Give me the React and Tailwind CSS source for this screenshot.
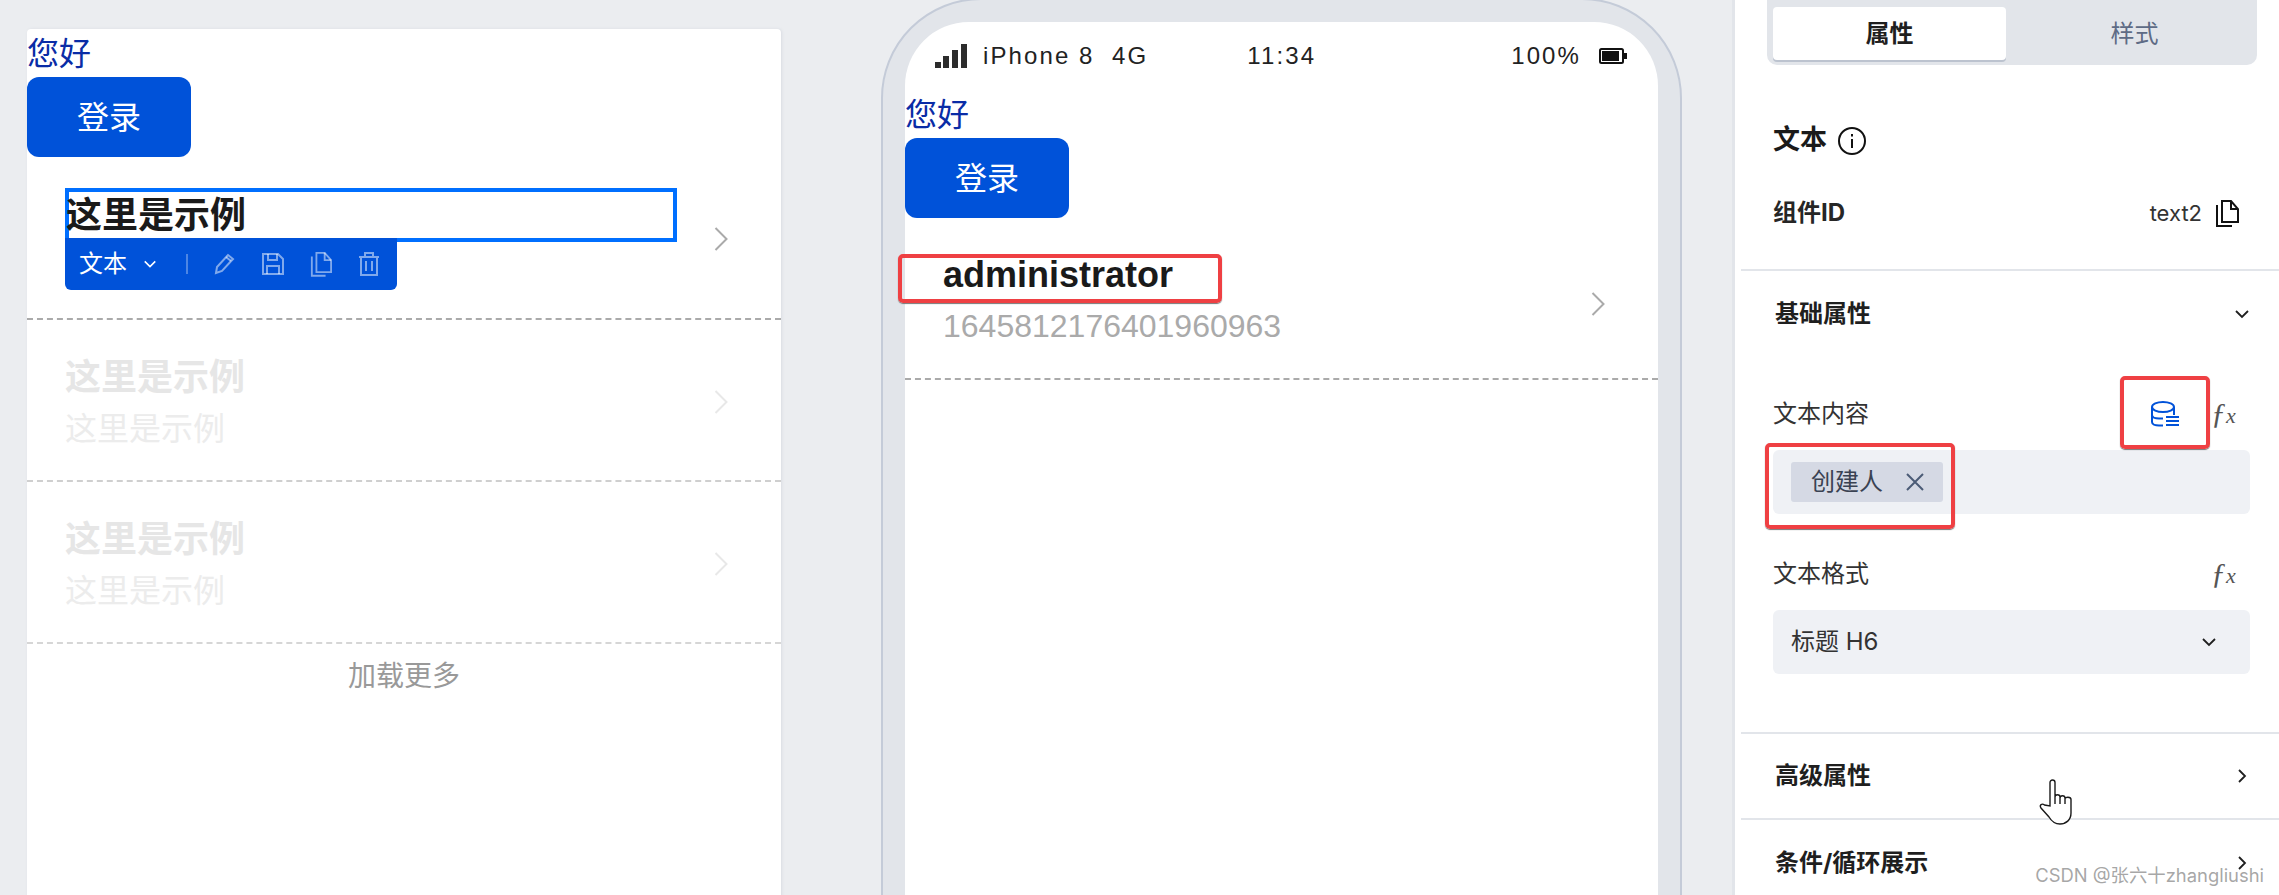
import React from "react";

const arial = { fontFamily: '"Liberation Sans","Noto Sans CJK SC",sans-serif' };

const ChevronRight = ({ color = "#aaaaaa", width = 2, className = "" }) => (
  <svg width="14" height="24" viewBox="0 0 14 24" fill="none" stroke={color} strokeWidth={width} className={`shrink-0 ${className}`}>
    <path d="M1.5 1l11 11-11 11" />
  </svg>
);

const Chevron = ({ dir = "down", size = 16, className = "" }) => (
  <svg width={size} height={size} viewBox="0 0 16 16" fill="none" stroke="currentColor" strokeWidth="1.8" className={className}>
    {dir === "down" ? <path d="M2 5l6 6 6-6" /> : <path d="M5 2l6 6-6 6" />}
  </svg>
);

const CopyIcon = ({ size = 24, stroke = "currentColor", width = 2 }) => (
  <svg width={size} height={size * 1.17} viewBox="0 0 24 28" fill="none" stroke={stroke} strokeWidth={width}>
    <path d="M7 2h9l7 8v13H7z" />
    <path d="M16 2v8h7" />
    <path d="M2 6v21h15" />
  </svg>
);

const Fx = () => (
  <span className="w-[22px] text-[30px] leading-[24px] italic text-[#555]" style={{ fontFamily: '"Liberation Serif",serif' }}>
    ƒ<span className="text-[22px]">x</span>
  </span>
);

const Annotation = ({ className }) => (
  <div className={`absolute border-4 border-[#ef4043] rounded-[5px] shadow-[0_1px_1px_#777] ${className}`} />
);

const LoginBlock = () => (
  <>
    <div className="h-[48px] text-[32px] leading-[50px] text-[#0a2ca6]">您好</div>
    <div className="w-[164px] h-[80px] pt-[2px] rounded-[12px] bg-[#0052d9] text-white text-[32px] flex items-center justify-center">登录</div>
  </>
);

const Toolbar = () => (
  <div className="absolute left-0 top-[50px] w-[332px] h-[52px] rounded-b-[6px] bg-[#0052d9] flex items-center pl-[14px] text-white">
    <span className="text-[24px] leading-[24px]">文本</span>
    <Chevron className="ml-[16px]" size={14} />
    <div className="w-[2px] h-[20px] bg-white/30 ml-[29px]" />
    <div className="flex items-center gap-[26px] ml-[26px] text-white/50">
      <svg width="22" height="22" viewBox="0 0 22 22" fill="none" stroke="currentColor" strokeWidth="2">
        <path d="M2 20l1-6L14 2l5 4L8 18z" />
        <path d="M12 4l5 4" />
      </svg>
      <svg width="22" height="22" viewBox="0 0 22 22" fill="none" stroke="currentColor" strokeWidth="2">
        <path d="M1 1h15l5 5v15H1z" />
        <path d="M6 1v6h9V1M5 21v-8h12v8" />
      </svg>
      <CopyIcon size={22} width={2} />
      <svg width="22" height="24" viewBox="0 0 22 24" fill="none" stroke="currentColor" strokeWidth="2">
        <path d="M1 5h20M7 5V1h8v4M3 5v18h16V5M8 9v10M14 9v10" />
      </svg>
    </div>
  </div>
);

const GhostRow = ({ border }) => (
  <div className={`flex items-center h-[162px] pt-[4px] pl-[38px] pr-[53px] border-b-2 border-dashed ${border}`}>
    <div className="flex-1">
      <div className="text-[36px] leading-[54px] font-bold text-[#e6e6e6]">这里是示例</div>
      <div className="text-[32px] leading-[48px] text-[#ececec]">这里是示例</div>
    </div>
    <ChevronRight color="#e8e8e8" />
  </div>
);

const LeftCard = () => (
  <div className="w-[881px] shrink-0 pl-[27px] pt-[29px]">
    <div className="w-[754px] h-[900px] bg-white rounded-t-[4px] shadow-[1px_0_3px_#d9dce2]">
      <LoginBlock />
      <div className="flex items-center gap-[37px] h-[163px] pt-[3px] pl-[38px] pr-[53px] border-b-2 border-dashed border-[#aaaaaa]">
        <div className="relative flex-1 h-[102px]">
          <div className="h-[54px] border-4 border-[#006fff] text-[36px] leading-[48px] font-bold text-[#1a1a1a]">
            <span className="-ml-[3px]">这里是示例</span>
          </div>
          <Toolbar />
        </div>
        <ChevronRight />
      </div>
      <GhostRow border="border-[#cfcfcf]" />
      <GhostRow border="border-[#d6d6d6]" />
      <div className="text-center text-[28px] leading-[42px] text-[#999] mt-[12px]">加载更多</div>
    </div>
  </div>
);

const Phone = () => (
  <div className="w-[801px] h-[1000px] shrink-0 -mt-[2px] border-2 border-[#c4cbd8] rounded-t-[100px] bg-[#e2e5ea] pt-[22px] pl-[22px] pr-[22px]">
    <div className="h-full bg-white rounded-t-[64px]" style={arial}>
      <div className="h-[68px] pt-[22px] pl-[30px] pr-[31px] flex items-start text-[24px] leading-[24px] tracking-[2.1px] text-[#222]">
        <svg width="32" height="24" viewBox="0 0 32 24" fill="#2c2c2c" className="mr-[16px] shrink-0">
          <rect x="0" y="18" width="6" height="6" />
          <rect x="8" y="12" width="6" height="12" />
          <rect x="17" y="6" width="6" height="18" />
          <rect x="26" y="0" width="6" height="24" />
        </svg>
        <span className="whitespace-pre">iPhone 8  4G</span>
        <span className="ml-[99px]">11:34</span>
        <span className="ml-auto">100%</span>
        <svg width="28" height="16" viewBox="0 0 28 16" className="ml-[18px] mt-[4px] shrink-0">
          <rect x="1" y="1" width="23" height="14" rx="1.5" fill="none" stroke="#111" strokeWidth="2" />
          <rect x="3" y="3" width="17" height="10" fill="#111" />
          <rect x="25" y="5" width="3" height="6" fill="#111" />
        </svg>
      </div>
      <LoginBlock />
      <div className="flex items-center h-[162px] pl-[38px] pr-[53px] border-b-2 border-dashed border-[#aaaaaa]">
        <div className="relative flex-1">
          <div className="h-[54px] text-[36px] leading-[56px] font-bold text-[#1a1a1a]">administrator</div>
          <Annotation className="-left-[45px] top-[7px] w-[324px] h-[49px]" />
          <div className="h-[48px] text-[32px] leading-[50px] text-[#aaaaaa]">1645812176401960963</div>
        </div>
        <ChevronRight className="mt-[12px]" />
      </div>
    </div>
  </div>
);

const SectionHeader = ({ title, dir, border = true }) => (
  <div className={`h-[86px] flex items-center justify-between pl-[34px] pr-[29px] ${border ? "border-b-2 border-[#e2e5ea]" : ""}`}>
    <span className="text-[24px] font-bold text-[#1f1f1f]">{title}</span>
    <Chevron dir={dir} className="text-[#1f1f1f]" />
  </div>
);

const RightPanel = () => (
  <div className="relative ml-[50px] flex-1 h-[895px] bg-white border-l-[3px] border-[#e2e5ea] pl-[6px]" style={{ fontFamily: 'Inter,"Noto Sans CJK SC",sans-serif' }}>
    <div className="ml-[26px] mr-[22px] h-[65px] rounded-b-[10px] bg-[#e2e5ea] flex pl-[6px] pt-[7px] text-[24px]">
      <div className="w-[233px] h-[53px] bg-white rounded-[4px] shadow-[0_2px_0_#bcc3cf] flex items-center justify-center font-bold text-[#1f1f1f]">属性</div>
      <div className="flex-1 h-[53px] pl-[6px] flex items-center justify-center text-[#5e6b85]">样式</div>
    </div>

    <div className="border-b-2 border-[#e2e5ea] pl-[32px] pr-[40px] pt-[61px] pb-[38px]">
      <div className="flex items-center gap-[11px] h-[28px] pt-[1px]">
        <span className="text-[27px] font-bold text-[#1a1a1a]">文本</span>
        <svg width="28" height="28" viewBox="0 0 28 28" fill="none" stroke="#111" strokeWidth="2">
          <circle cx="14" cy="14" r="13" />
          <path d="M14 12v9M14 7v2.500" />
        </svg>
      </div>
      <div className="flex items-center justify-between h-[36px] mt-[41px]">
        <span className="text-[24px] font-bold text-[#262626]">组件ID</span>
        <span className="flex items-center gap-[13px] text-[22px] text-[#333]">
          text2
          <CopyIcon size={24} stroke="#111" />
        </span>
      </div>
    </div>

    <SectionHeader title="基础属性" dir="down" border={false} />

    <div className="relative border-b-2 border-[#e2e5ea] pl-[32px] pr-[29px] pt-[39px] pb-[58px] text-[24px] text-[#333]">
      <div className="flex items-center justify-between h-[36px]">
        <span>文本内容</span>
        <div className="flex items-center gap-[32px] mr-[17px]">
          <svg width="28" height="26" viewBox="0 0 28 26" fill="none" stroke="#0052d9" strokeWidth="2">
            <ellipse cx="12" cy="6" rx="11" ry="5" />
            <path d="M1 6v15c0 2 3 3.500 7 3.500h4M1 14c0 2 3 3.500 7 3.500h4M23 6v8" />
            <path d="M15 16h13M15 20h13M15 24h13" />
          </svg>
          <Fx />
        </div>
      </div>
      <div className="mt-[18px] h-[64px] rounded-[6px] bg-[#eff1f5] flex items-center pl-[18px]">
        <div className="w-[152px] h-[40px] rounded-[3px] bg-[#d5d9e4] flex items-center pl-[20px] text-[#3a4252]">
          创建人
          <svg width="18" height="18" viewBox="0 0 18 18" fill="none" stroke="#4b5b76" strokeWidth="2" className="ml-[23px]">
            <path d="M1 1l16 16M17 1L1 17" />
          </svg>
        </div>
      </div>
      <div className="flex items-center justify-between h-[36px] mt-[42px]">
        <span>文本格式</span>
        <span className="mr-[17px] flex"><Fx /></span>
      </div>
      <div className="mt-[18px] h-[64px] rounded-[6px] bg-[#eff1f5] flex items-center justify-between pl-[18px] pr-[33px]">
        <span>标题 H6</span>
        <Chevron className="text-[#1f1f1f]" />
      </div>
      <Annotation className="left-[24px] top-[86px] w-[190px] h-[86px]" />
      <Annotation className="left-[379px] top-[19px] w-[90px] h-[73px]" />
    </div>

    <SectionHeader title="高级属性" dir="right" />
    <SectionHeader title="条件/循环展示" dir="right" border={false} />

    {/* mouse pointer caught in the capture */}
    <svg width="34" height="46" viewBox="0 0 34 46" fill="#fff" stroke="#1a1a1a" strokeWidth="1.4" className="absolute left-[304px] top-[779px]">
      <path d="M11 27V3.500a2.300 2.300 0 0 1 5 0V18c0-3 5-3 5 0v1c0-3 5-3 5 0v1c0-2.500 6-2.500 6 0.500V34c0 7-5 11-11 11-5 0-8-2-11-7L2 29c-2-3 1-5 3.500-3z" />
      <path d="M16 18v7M21 19v6M26 20v5" fill="none" />
    </svg>
    <div className="absolute right-[15px] top-[864px] text-[18.400px] leading-[22px] text-[#8f8f8f]/80 whitespace-nowrap">CSDN @张六十zhangliushi</div>
  </div>
);

export default function App() {
  return (
    <div className="flex w-[2279px] h-[895px] overflow-hidden bg-[#ebedf0]" style={arial}>
      <LeftCard />
      <Phone />
      <RightPanel />
    </div>
  );
}
